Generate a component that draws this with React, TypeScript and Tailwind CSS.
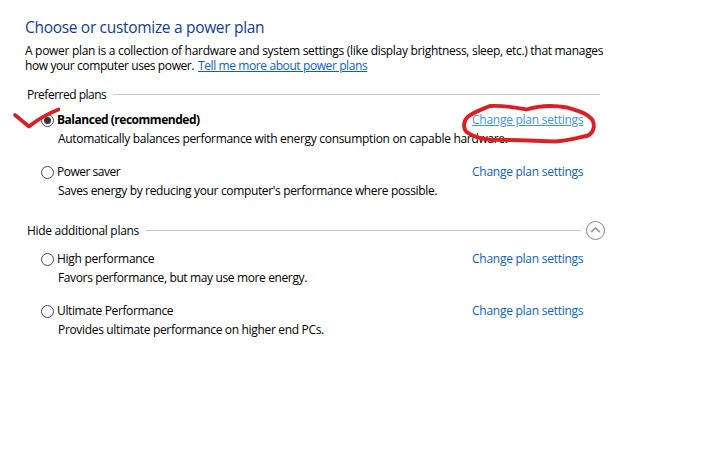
type PlanProps = {
  name: string;
  description: string;
  selected?: boolean;
  nameSpacing: string;
  descriptionSpacing: string;
};

function Radio({ selected }: { selected?: boolean }) {
  return (
    <span className="mt-[2px] flex size-[13px] shrink-0 items-center justify-center rounded-full border border-[#444] bg-white">
      {selected && <span className="size-[7px] rounded-full bg-[#333]" />}
    </span>
  );
}

function Plan({ name, description, selected, nameSpacing, descriptionSpacing }: PlanProps) {
  return (
    <div className="h-[52px] pl-[41px]">
      <div className="flex h-4">
        <Radio selected={selected} />
        <span className={`ml-[3px] w-[415px] ${nameSpacing} ${selected ? "font-bold" : ""}`}>{name}</span>
        <a
          className={`tracking-[-0.26px] ${selected ? "text-[#3f92e4] underline underline-offset-1" : "text-[#0b62bd]"}`}
        >
          Change plan settings
        </a>
      </div>
      <p className={`mt-[3px] pl-[17px] ${descriptionSpacing}`}>{description}</p>
    </div>
  );
}

export default function App() {
  return (
    <main className="relative h-[457px] w-[706px] overflow-hidden whitespace-nowrap bg-white pt-4 font-['Open_Sans','Noto_Sans',sans-serif] text-[12px] leading-4 text-black">
      <h1 className="pl-[25px] text-[15.5px] leading-[22px] tracking-[-0.31px] text-[#143a94]">Choose or customize a power plan</h1>
      <div className="mt-[5px] pl-[25px] leading-[15px]">
        <p className="tracking-[-0.305px]">
          A power plan is a collection of hardware and system settings (like display brightness, sleep, etc.) that manages
        </p>
        <p className="flex">
          <span className="w-[173px] tracking-[-0.4px]">how your computer uses power.</span>
          <a className="tracking-[-0.4px] text-[#0b62bd] underline underline-offset-1">Tell me more about power plans</a>
        </p>
      </div>

      <section>
        <div className="mt-[14px] flex h-4 items-center pl-[27px]">
          <h2 className="w-[86px] tracking-[-0.5px]">Preferred plans</h2>
          <div className="mb-[2px] h-px w-[487px] bg-[#c8c8c8]" />
        </div>
        <div className="mt-[9px]">
          <Plan name="Balanced (recommended)" description="Automatically balances performance with energy consumption on capable hardware." selected nameSpacing="tracking-[-0.48px]" descriptionSpacing="tracking-[-0.31px]" />
          <Plan name="Power saver" description="Saves energy by reducing your computer's performance where possible." nameSpacing="tracking-[-0.48px]" descriptionSpacing="tracking-[-0.35px]" />
        </div>
      </section>

      <section>
        <div className="mt-[4px] flex h-[20px] items-center pl-[27px]">
          <h2 className="w-[119px] pt-[2px] tracking-[-0.3px]">Hide additional plans</h2>
          <div className="h-px w-[435px] bg-[#c8c8c8]" />
          <svg className="ml-[5px] size-5" viewBox="0 0 20 20" fill="none">
            <circle cx="9.5" cy="10.5" r="9" stroke="#858585" />
            <path d="M5.2 12.200 9.500 7.900l4.300 4.300" stroke="#999" strokeWidth="1.7" />
          </svg>
        </div>
        <div className="mt-[11px]">
          <Plan name="High performance" description="Favors performance, but may use more energy." nameSpacing="tracking-[-0.27px]" descriptionSpacing="tracking-[-0.37px]" />
          <Plan name="Ultimate Performance" description="Provides ultimate performance on higher end PCs." nameSpacing="tracking-[-0.37px]" descriptionSpacing="tracking-[-0.33px]" />
        </div>
      </section>

      {/* Red pen marks drawn over the selected plan */}
      <svg className="pointer-events-none absolute inset-0 h-[457px] w-[706px]" viewBox="0 0 706 457" fill="none" stroke="#d92026" strokeLinecap="round" strokeLinejoin="round">
        <path d="M15 115 29 126.500Q42 116 58.500 109.500" strokeWidth="3.7" />
        <path d="M526.500 109.500C515 107.500 503 105 490 106C483 109 474 112 467.500 117C463 122 463 128 466.500 132C473 137 482 139 492 140C512 139.500 535 141 555 141.500C568 141 577 138 588 135.500C594 132 595 126 592.500 120C587 113 576 110 567 107.500C553 105 538 106 526.500 109.500Z" strokeWidth="3.9" />
      </svg>
    </main>
  );
}
